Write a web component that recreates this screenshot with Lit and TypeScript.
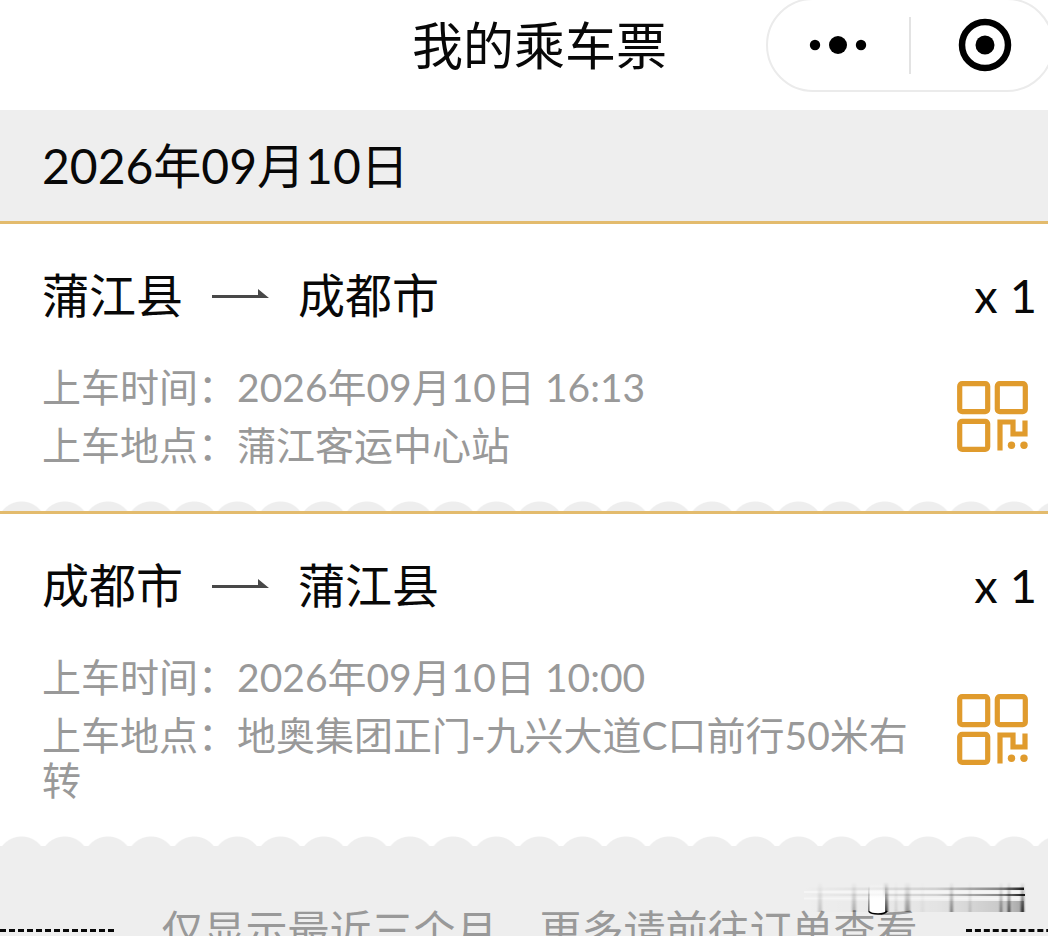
import { LitElement, html, svg, css } from 'lit';
import { customElement, property } from 'lit/decorators.js';

interface Ticket {
  from: string;
  to: string;
  count: number;
  time: string;
  place: string;
}

const tickets: Ticket[] = [
  {
    from: '蒲江县',
    to: '成都市',
    count: 1,
    time: '2026年09月10日 16:13',
    place: '蒲江客运中心站',
  },
  {
    from: '成都市',
    to: '蒲江县',
    count: 1,
    time: '2026年09月10日 10:00',
    place: '地奥集团正门-九兴大道C口前行50米右转',
  },
];

@customElement('ticket-card')
class TicketCard extends LitElement {
  static styles = css`
    :host {
      display: block;
      background: #ffffff;
      border-top: 3px solid #e3bb6d;
    }

    .body {
      padding: 47px 42px 33px;
    }

    .route {
      display: flex;
      align-items: center;
      margin: 0 0 46px;
      font-size: 47px;
      font-weight: 400;
      line-height: 48px;
      color: #080808;
    }

    .arrow {
      width: 58px;
      height: 12px;
      margin: 0 28px 0 29px;
    }

    .count {
      margin-left: auto;
    }

    .info {
      display: flex;
      align-items: center;
      gap: 24px;
    }

    .details {
      flex: 1;
      display: grid;
      gap: 13px;
      font-size: 39px;
      line-height: 45px;
      color: #999999;
    }

    .details p {
      margin: 0;
      word-break: break-all;
    }

    .qr {
      display: block;
      margin-right: 9px;
      padding: 0;
      border: none;
      background: none;
      cursor: pointer;
    }

    .qr svg {
      display: block;
      width: 71px;
      height: 71px;
    }

    /* torn paper edge */
    .edge {
      height: 10px;
      background-image: radial-gradient(circle at 50% 25px, #eeeeee 24px, transparent 25px);
      background-size: 4% 10px;
    }
  `;

  @property({ attribute: false }) ticket!: Ticket;

  render() {
    const t = this.ticket;
    return html`
      <div class="body">
        <h3 class="route">
          <span>${t.from}</span>
          <svg class="arrow" viewBox="0 0 58 12" aria-hidden="true">
            <path d="M0 6H46V0L57 9H0Z" fill="#484848" />
          </svg>
          <span>${t.to}</span>
          <span class="count">x ${t.count}</span>
        </h3>
        <div class="info">
          <div class="details">
            <p>上车时间：${t.time}</p>
            <p>上车地点：${t.place}</p>
          </div>
          <button class="qr" type="button" aria-label="二维码">
            <svg viewBox="0 0 71 71" fill="none" stroke="#e09b2d" stroke-width="5.2">
              <rect x="2.7" y="2.7" width="28" height="28" rx="2.5" />
              <rect x="40.3" y="2.7" width="28" height="28" rx="2.5" />
              <rect x="2.7" y="40.3" width="28" height="28" rx="2.5" />
              <path d="M43 69.5V41H56V53H68V39.5" />
              <circle cx="54.5" cy="64.3" r="3.7" fill="#e09b2d" stroke="none" />
              <circle cx="67" cy="64.3" r="3.7" fill="#e09b2d" stroke="none" />
            </svg>
          </button>
        </div>
      </div>
      <div class="edge"></div>
    `;
  }
}

// vertical streaks of the smudge: x, width, opacity
const streaks = [
  [14, 4, 0.2],
  [48, 4, 0.3],
  [80, 4, 0.85],
  [91, 2, 0.15],
  [101, 5, 0.4],
  [117, 3, 0.05],
  [146, 3, 0.5],
  [165, 2, 0.2],
  [196, 2, 0.6],
  [204, 2, 0.9],
  [217, 3, 0.9],
];

@customElement('app-root')
class AppRoot extends LitElement {
  static styles = css`
    :host {
      display: block;
      position: relative;
      height: 100vh;
      overflow: hidden;
      background: #eeeeee;
      font-family: Lato, 'Noto Sans CJK SC', sans-serif;
    }

    /* the sheet runs a little past the right side of the window */
    .sheet {
      margin-right: -31px;
    }

    .header {
      display: grid;
      grid-template-columns: 1fr auto 1fr;
      align-items: center;
      height: 110px;
      box-sizing: border-box;
      padding-bottom: 20px;
      background: #ffffff;
    }

    .title {
      grid-column: 2;
      margin: 0;
      font-size: 51px;
      font-weight: 400;
      line-height: 51px;
      color: #080808;
    }

    .capsule {
      justify-self: end;
      display: flex;
      align-items: center;
      width: 288px;
      height: 94px;
      box-sizing: border-box;
      margin: -2px 25px -2px 0;
      border: 2px solid #ebebeb;
      border-radius: 47px;
    }

    .capsule button {
      flex: 1;
      display: flex;
      justify-content: center;
      padding: 0;
      border: none;
      background: none;
      cursor: pointer;
    }

    .divider {
      width: 2px;
      height: 57px;
      background: #e3e3e3;
    }

    .date {
      margin: 0;
      padding: 32px 42px 31px;
      font-size: 48px;
      font-weight: 400;
      line-height: 48px;
      color: #080808;
    }

    .footer {
      display: flex;
      align-items: center;
      padding-top: 63px;
      font-size: 42px;
      line-height: 42px;
      color: #999999;
    }

    .footer p {
      margin: 0 48px;
      white-space: nowrap;
    }

    .dashes {
      flex: 1;
      border-top: 3px dashed #080808;
    }

    .smudge {
      position: absolute;
      right: 20px;
      bottom: 20px;
      width: 224px;
      height: 36px;
    }
  `;

  renderSmudge() {
    return html`
      <svg class="smudge" viewBox="0 0 224 36" aria-hidden="true">
        <defs>
          <linearGradient id="across">
            <stop offset="0" stop-color="#000" stop-opacity="0" />
            <stop offset="0.6" stop-color="#000" stop-opacity="0.12" />
            <stop offset="0.9" stop-color="#000" stop-opacity="0.45" />
            <stop offset="1" stop-color="#000" stop-opacity="0.9" />
          </linearGradient>
          <linearGradient id="down" x2="0" y2="1">
            <stop offset="0" stop-color="#000" stop-opacity="0" />
            <stop offset="1" stop-color="#000" stop-opacity="0.9" />
          </linearGradient>
          <linearGradient id="pale" x2="0" y2="1">
            <stop offset="0" stop-color="#fff" stop-opacity="0" />
            <stop offset="0.5" stop-color="#fff" />
          </linearGradient>
          <filter id="soft" x="-5%" y="-20%" width="110%" height="140%">
            <feGaussianBlur stdDeviation="1 0" />
          </filter>
        </defs>
        <rect x="0" y="7.5" width="220" height="2.5" fill="url(#across)" />
        <rect x="0" y="14" width="221" height="2" fill="url(#across)" />
        <rect x="0" y="21" width="220" height="11" fill="url(#across)" opacity="0.35" />
        <rect x="0" y="11" width="220" height="2" fill="#fff" opacity="0.4" />
        <rect x="0" y="17.5" width="220" height="2" fill="#fff" opacity="0.4" />
        <g filter="url(#soft)">
          ${streaks.map(
            ([x, w, o]) =>
              svg`<rect x=${x} y="2" width=${w} height="30" fill="url(#down)" opacity=${o} />`
          )}
        </g>
        <rect x="66" y="4" width="15" height="29" fill="url(#pale)" />
        <rect x="64" y="6" width="1.5" height="26" fill="url(#down)" opacity="0.6" />
        <path d="M65 31.5Q67 34 74 34Q81 34 83 31" fill="none" stroke="#000" stroke-width="1.5" />
      </svg>
    `;
  }

  render() {
    return html`
      <div class="sheet">
        <header class="header">
          <h1 class="title">我的乘车票</h1>
          <div class="capsule">
            <button type="button" aria-label="更多">
              <svg width="60" height="20" viewBox="0 0 60 20">
                <circle cx="6" cy="10" r="5.2" />
                <circle cx="29" cy="10" r="9" />
                <circle cx="52" cy="10" r="5.2" />
              </svg>
            </button>
            <span class="divider"></span>
            <button type="button" aria-label="关闭">
              <svg width="60" height="60" viewBox="0 0 60 60">
                <circle cx="33" cy="30" r="23" fill="none" stroke="#000" stroke-width="6.5" />
                <circle cx="33" cy="30" r="9.5" />
              </svg>
            </button>
          </div>
        </header>
        <main>
          <h2 class="date">2026年09月10日</h2>
          ${tickets.map((t) => html`<ticket-card .ticket=${t}></ticket-card>`)}
        </main>
        <footer class="footer">
          <span class="dashes"></span>
          <p>仅显示最近三个月，更多请前往订单查看</p>
          <span class="dashes"></span>
        </footer>
      </div>
      ${this.renderSmudge()}
    `;
  }
}
